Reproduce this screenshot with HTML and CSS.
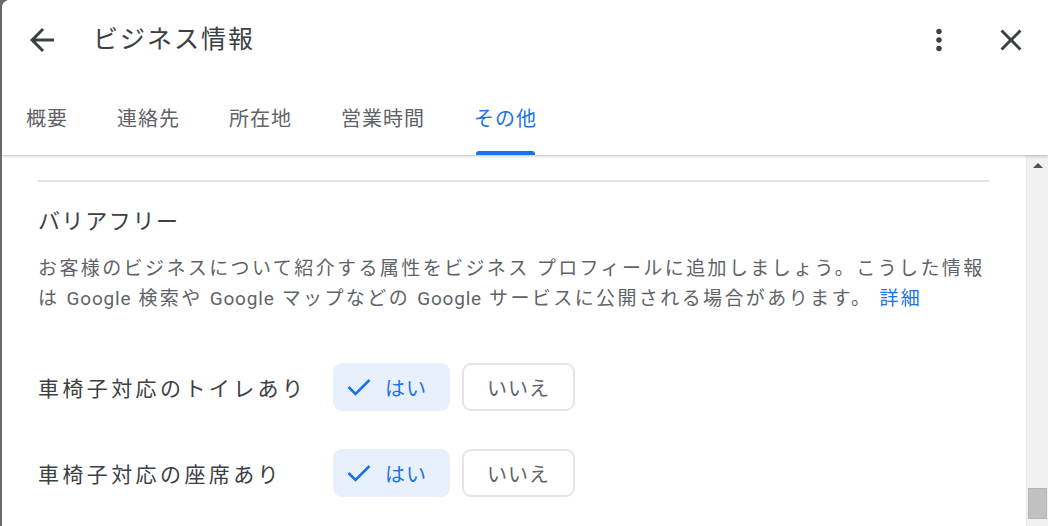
FILE: index.html
```html
<!DOCTYPE html>
<html lang="ja">
<head>
<meta charset="utf-8">
<title>ビジネス情報</title>
<link rel="stylesheet" href="styles.css">
</head>
<body>
<div class="dialog">
  <header class="header">
    <div class="toprow">
      <svg class="icon back" viewBox="0 0 24 24"><path d="M20 11H7.83l5.59-5.59L12 4l-8 8 8 8 1.41-1.41L7.83 13H20v-2z"/></svg>
      <h1 class="title">ビジネス情報</h1>
      <div class="spacer"></div>
      <svg class="icon kebab" viewBox="0 0 24 24"><path d="M12 8c1.1 0 2-.9 2-2s-.9-2-2-2-2 .9-2 2 .9 2 2 2zm0 2c-1.1 0-2 .9-2 2s.9 2 2 2 2-.9 2-2-.9-2-2-2zm0 6c-1.1 0-2 .9-2 2s.9 2 2 2 2-.9 2-2-.9-2-2-2z"/></svg>
      <svg class="icon close" viewBox="0 0 24 24"><path d="M19 6.41L17.59 5 12 10.59 6.41 5 5 6.41 10.59 12 5 17.59 6.41 19 12 13.41 17.59 19 19 17.59 13.41 12z"/></svg>
    </div>
    <nav class="tabs">
      <div class="tab">概要</div>
      <div class="tab">連絡先</div>
      <div class="tab">所在地</div>
      <div class="tab">営業時間</div>
      <div class="tab active">その他</div>
    </nav>
  </header>
  <div class="body">
    <main class="content">
      <div class="divider"></div>
      <h2 class="heading">バリアフリー</h2>
      <p class="desc">お客様のビジネスについて紹介する属性をビジネス プロフィールに追加しましょう。こうした情報<br>は <span class="lat">Google</span> 検索や <span class="lat">Google</span> マップなどの <span class="lat">Google</span> サービスに公開される場合があります。 <a class="link">詳細</a></p>
      <div class="row first">
        <div class="label">車椅子対応のトイレあり</div>
        <div class="btn yes"><svg class="check" viewBox="0 0 24 18"><polyline points="1.5,9 8.5,16 22.5,2"/></svg><span>はい</span></div>
        <div class="btn no">いいえ</div>
      </div>
      <div class="row">
        <div class="label">車椅子対応の座席あり</div>
        <div class="btn yes"><svg class="check" viewBox="0 0 24 18"><polyline points="1.5,9 8.5,16 22.5,2"/></svg><span>はい</span></div>
        <div class="btn no">いいえ</div>
      </div>
    </main>
    <div class="scrollbar">
      <div class="sb-up"><div class="tri"></div></div>
      <div class="sb-thumb"></div>
    </div>
  </div>
</div>
</body>
</html>
```

FILE: styles.css
```css
html, body {
  margin: 0;
  padding: 0;
  width: 1048px;
  height: 526px;
  overflow: hidden;
}
body {
  background: #6a6a6a;
  font-family: Roboto, "Noto Sans CJK JP", sans-serif;
}
.dialog {
  margin-left: 2px;
  height: 526px;
  background: #ffffff;
  border-top-left-radius: 8px;
  display: flex;
  flex-direction: column;
}
.header {
  height: 155px;
  flex: none;
  position: relative;
  z-index: 1;
  background: #fff;
  box-shadow: 0 1px 3px rgba(60, 64, 67, 0.35);
  border-top-left-radius: 8px;
}
.toprow {
  height: 80px;
  display: flex;
  align-items: center;
  padding-left: 22px;
  padding-right: 19px;
}
.icon {
  fill: #3c4043;
  flex: none;
}
.back { width: 36px; height: 36px; }
.kebab { width: 34px; height: 34px; }
.close { width: 36px; height: 36px; margin-left: 37px; }
.title {
  margin: 0 0 0 33px;
  font-size: 25px;
  font-weight: 400;
  letter-spacing: 2px;
  color: #3c4043;
  line-height: 32px;
}
.spacer { flex: 1; }
.tabs {
  height: 75px;
  display: flex;
  padding-left: 24px;
  gap: 49px;
}
.tab {
  position: relative;
  display: flex;
  align-items: center;
  font-size: 20px;
  letter-spacing: 1px;
  color: #5f6368;
}
.tab.active { color: #1a73e8; }
.tab.active::after {
  content: "";
  position: absolute;
  left: 2px;
  right: 2px;
  bottom: 0;
  height: 4px;
  border-radius: 3px 3px 0 0;
  background: #1a73e8;
}
.body {
  flex: 1;
  display: flex;
  min-height: 0;
}
.content {
  flex: 1;
  padding: 25px 37px 0 36px;
  overflow: hidden;
}
.divider {
  height: 2px;
  background: #e3e3e5;
}
.heading {
  margin: 25px 0 0;
  font-size: 22px;
  font-weight: 400;
  letter-spacing: 1.6px;
  line-height: 30px;
  color: #3c4043;
}
.desc {
  margin: 17px 0 0;
  font-size: 19px;
  letter-spacing: 2.4px;
  line-height: 30px;
  color: #5f6368;
  white-space: nowrap;
}
.lat { letter-spacing: 0.8px; }
.link { color: #1a73e8; }
.row {
  display: flex;
  align-items: center;
  margin-top: 38px;
}
.row.first { margin-top: 49px; }
.label {
  width: 295px;
  flex: none;
  font-size: 21px;
  letter-spacing: 3.4px;
  color: #3c4043;
}
.btn {
  height: 48px;
  box-sizing: border-box;
  border-radius: 9px;
  display: flex;
  align-items: center;
  font-size: 20px;
  letter-spacing: 1px;
}
.yes {
  width: 117px;
  background: #e8f0fe;
  color: #1a73e8;
  padding-left: 14px;
}
.check {
  width: 24px;
  height: 18px;
  margin-right: 14px;
  fill: none;
  stroke: #1a73e8;
  stroke-width: 2.6;
}
.no {
  width: 113px;
  margin-left: 12px;
  border: 2px solid #e5e5e7;
  justify-content: center;
  color: #5f6368;
}
.scrollbar {
  width: 21px;
  flex: none;
  background: #f1f1f1;
  border-left: 1px solid #e9e9e9;
  display: flex;
  flex-direction: column;
}
.sb-up {
  height: 21px;
  display: flex;
  align-items: center;
  justify-content: center;
}
.tri {
  width: 0;
  height: 0;
  border-left: 5px solid transparent;
  border-right: 5px solid transparent;
  border-bottom: 5px solid #505050;
}
.sb-thumb {
  margin: auto 1px 7px 1px;
  height: 31px;
  background: #c1c1c1;
  border: 1px solid #b5b5b5;
  box-sizing: border-box;
}
```
